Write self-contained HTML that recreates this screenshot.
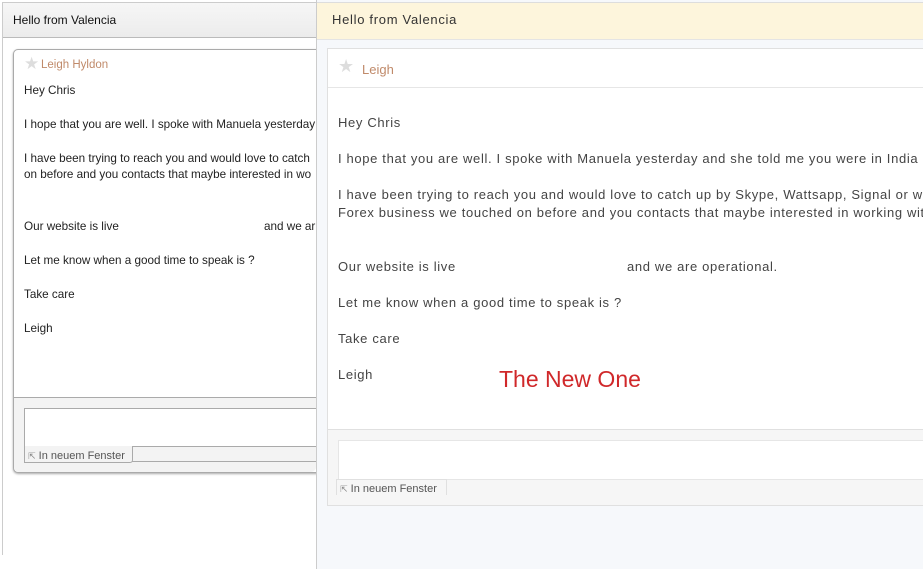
<!DOCTYPE html>
<html><head><style>
body{margin:0;width:923px;height:569px;overflow:hidden;background:#fff;font-family:"Liberation Sans",sans-serif;position:relative;color:#333}
.a{position:absolute}
.l p{margin:0;position:absolute;left:24px;font-size:11.7px;color:#222;white-space:nowrap}
.r p{margin:0;position:absolute;left:338px;font-size:13px;color:#444;white-space:nowrap;letter-spacing:0.65px}
</style></head><body>
<div class="a" style="left:2px;top:2px;width:314px;height:552px;border-left:1px solid #ccc;border-top:1px solid #ccc"></div>
<div class="a" style="left:3px;top:3px;width:313px;height:34px;background:linear-gradient(#f6f6f6,#ececec);border-bottom:1px solid #bbb"></div>
<div class="a" style="left:13px;top:13px;font-size:12px;color:#111">Hello from Valencia</div>
<div class="a" style="left:13px;top:49px;width:320px;height:422px;border:1px solid #aaa;border-radius:5px;background:#fff;box-shadow:0 1px 2px #aaa"></div>
<div class="a" style="left:14px;top:397px;width:302px;height:74px;background:#f3f3f3;border-top:1px solid #aaa;border-radius:0 0 5px 5px"></div>
<div class="a" style="left:24px;top:408px;width:292px;height:37px;border:1px solid #aaa;background:#fff"></div>
<div class="a" style="left:24px;top:446px;width:107px;height:16px;border:1px solid #aaa;border-top:none;background:#f3f3f3;border-radius:0 0 3px 0;font-size:11px;color:#555;line-height:20px">&nbsp;<span style="color:#888;font-size:9px">⇱</span> In neuem Fenster</div>
<div class="a" style="left:132px;top:461px;width:184px;border-top:1px solid #aaa"></div>
<div class="a" style="left:24px;top:55px;font-size:17px;color:#ddd;line-height:17px">★</div>
<div class="a" style="left:41px;top:59px;font-size:11.5px;color:#c08a6a">Leigh Hyldon</div>
<div class="l">
<p style="top:84px">Hey Chris</p>
<p style="top:118px">I hope that you are well. I spoke with Manuela yesterday</p>
<p style="top:152px">I have been trying to reach you and would love to catch</p>
<p style="top:168px">on before and you contacts that maybe interested in wo</p>
<p style="top:220px">Our website is live</p>
<p style="top:220px;left:264px">and we ar</p>
<p style="top:254px">Let me know when a good time to speak is ?</p>
<p style="top:288px">Take care</p>
<p style="top:322px">Leigh</p>
</div>
<div class="a" style="left:316px;top:0;width:607px;height:569px;background:#f6f8fb;border-left:1px solid #ccc"></div>
<div class="a" style="left:317px;top:2px;width:606px;height:36px;background:#fdf5dc;border-top:1px solid #ddd;border-bottom:1px solid #e4e4e4"></div>
<div class="a" style="left:332px;top:12px;font-size:13px;color:#333;letter-spacing:0.7px">Hello from Valencia</div>
<div class="a" style="left:327px;top:48px;width:600px;height:456px;border:1px solid #e0e0e0;background:#fff"></div>
<div class="a" style="left:328px;top:87px;width:595px;border-top:1px solid #e6e6e6"></div>
<div class="a" style="left:338px;top:56px;font-size:18px;color:#ddd">★</div>
<div class="a" style="left:362px;top:62px;font-size:13px;color:#c08a6a">Leigh</div>
<div class="a" style="left:328px;top:429px;width:595px;height:75px;background:#f6f6f6;border-top:1px solid #e0e0e0"></div>
<div class="a" style="left:338px;top:440px;width:585px;height:38px;border:1px solid #e6e6e6;background:#fff"></div>
<div class="a" style="left:336px;top:479px;width:109px;height:15px;border:1px solid #e0e0e0;border-bottom:none;background:#f6f6f6;font-size:11px;color:#555;line-height:18px">&nbsp;<span style="color:#888;font-size:9px">⇱</span> In neuem Fenster</div>
<div class="r">
<p style="top:115px">Hey Chris</p>
<p style="top:151px">I hope that you are well. I spoke with Manuela yesterday and she told me you were in India !</p>
<p style="top:187px">I have been trying to reach you and would love to catch up by Skype, Wattsapp, Signal or wh</p>
<p style="top:205px">Forex business we touched on before and you contacts that maybe interested in working wit</p>
<p style="top:259px">Our website is live</p>
<p style="top:259px;left:627px">and we are operational.</p>
<p style="top:295px">Let me know when a good time to speak is ?</p>
<p style="top:331px">Take care</p>
<p style="top:367px">Leigh</p>
</div>
<div class="a" style="left:499px;top:366px;font-size:23px;color:#d0282a">The New One</div>
</body></html>
